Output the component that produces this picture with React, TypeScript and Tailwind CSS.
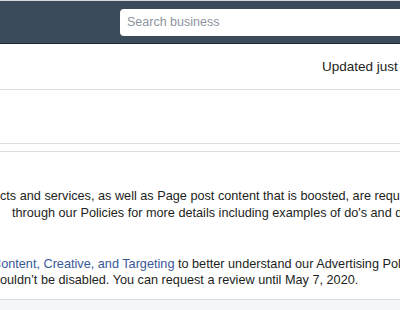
const lineCls = 'whitespace-nowrap h-[17px] leading-[17px]';

export default function App() {
  return (
    <div className="w-[400px] h-[310px] overflow-hidden bg-white text-[#1c1e21] font-['Liberation_Sans',Arial,sans-serif] text-[12.7px]">
      {/* top bar */}
      <div className="h-[44px] bg-[#3b4b5b] border-t border-[#d3d6db] border-b border-b-[#1f2b36] flex items-start">
        <div className="ml-[120px] mt-[8px] h-[27px] w-[300px] shrink-0 rounded-[4px] bg-white flex items-center pl-[7px] text-[12.5px] text-[#8d949e]">
          Search business
        </div>
      </div>

      {/* status row */}
      <div className="h-[46px] border-b border-[#dadde1] flex items-center">
        <div className="ml-[322px] whitespace-nowrap text-[13.5px] pt-[2px]">Updated just now</div>
      </div>

      {/* empty card */}
      <div className="h-[54px] border-b border-[#dadde1]" />
      <div className="h-[7px]" />

      {/* policy card */}
      <div className="h-[149px] border-t border-[#dadde1] border-b flex flex-col">
        <div className="mt-[36px] flex flex-col">
          <div className={lineCls}>cts and services, as well as Page post content that is boosted, are required to follow our Advertising Policies.</div>
          <div className={lineCls + ' pl-[12px]'}>through our Policies for more details including examples of do's and don'ts.</div>
        </div>
        <div className="mt-[34px] flex flex-col">
          <div className={lineCls + ' -ml-[8px]'}>
            <span className="text-[#385898]">Content, Creative, and Targeting</span> to better understand our Advertising Policies
          </div>
          <div className={lineCls + ' -mt-[1px]'}>ouldn’t be disabled. You can request a review until May 7, 2020.</div>
        </div>
      </div>

      <div className="h-[20px] bg-[#f5f6f7]" />
    </div>
  );
}
